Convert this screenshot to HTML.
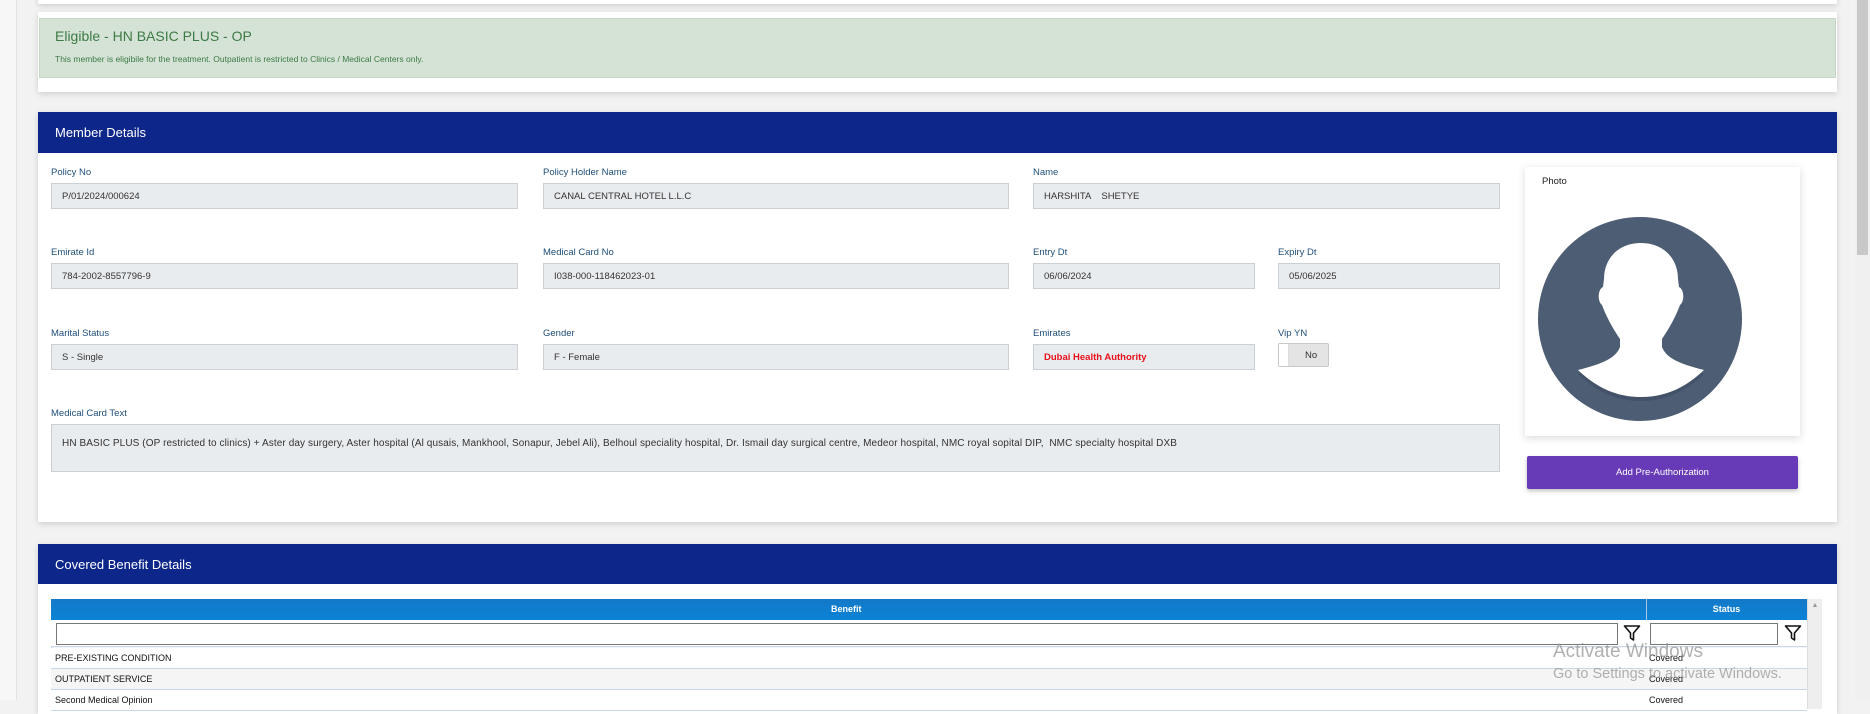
<!DOCTYPE html>
<html><head><meta charset="utf-8">
<style>
*{box-sizing:border-box;margin:0;padding:0}
body{width:1870px;height:700px;overflow:hidden;background:#f2f2f2;font-family:"Liberation Sans",sans-serif;position:relative}
.abs{position:absolute}
.card{position:absolute;background:#fff;box-shadow:0 2px 6px rgba(0,0,0,.15)}
.hdr{position:absolute;background:#0d2689;color:#fff;font-size:13px;padding-left:17px;display:flex;align-items:center}
.lbl{position:absolute;font-size:9.5px;color:#1f4e79}
.inp{position:absolute;background:#e9ecef;border:1px solid #ccd0d4;font-size:9.5px;color:#333;padding-left:10px;display:flex;align-items:center;height:26px}
.row{position:absolute;left:51px;width:1756px;height:21px;border-bottom:1px solid #c5d7ea;font-size:9px;color:#111;background:#fff}
.row span{position:absolute;top:5px}
</style></head><body>
<div class="abs" style="left:0;top:0;width:17px;height:700px;background:#f7f7f7;border-right:1px solid #e2e2e2"></div>
<div class="abs" style="right:0;top:0;width:15px;height:700px;background:#f0f0f0"></div>
<div class="abs" style="right:2px;top:0;width:11px;height:255px;background:#c8c8c8"></div>
<div class="card" style="left:38px;top:-10px;width:1799px;height:14px"></div>

<div class="card" style="left:38px;top:12px;width:1799px;height:80px"></div>
<div class="abs" style="left:39px;top:18px;width:1797px;height:60px;background:#d4e3d6;border:1px solid #c3d9c6"></div>
<div class="abs" style="left:55px;top:28px;font-size:14px;color:#3d7a45">Eligible - HN BASIC PLUS - OP</div>
<div class="abs" style="left:55px;top:54px;font-size:8.5px;color:#3d7a45">This member is eligibile for the treatment. Outpatient is restricted to Clinics / Medical Centers only.</div>

<div class="card" style="left:38px;top:112px;width:1799px;height:410px"></div>
<div class="hdr" style="left:38px;top:112px;width:1799px;height:41px">Member Details</div>

<div class="lbl" style="left:51px;top:167px">Policy No</div>
<div class="inp" style="left:51px;top:183px;width:467px">P/01/2024/000624</div>
<div class="lbl" style="left:543px;top:167px">Policy Holder Name</div>
<div class="inp" style="left:543px;top:183px;width:466px">CANAL CENTRAL HOTEL L.L.C</div>
<div class="lbl" style="left:1033px;top:167px">Name</div>
<div class="inp" style="left:1033px;top:183px;width:467px">HARSHITA &nbsp;&nbsp; SHETYE</div>

<div class="lbl" style="left:51px;top:247px">Emirate Id</div>
<div class="inp" style="left:51px;top:263px;width:467px">784-2002-8557796-9</div>
<div class="lbl" style="left:543px;top:247px">Medical Card No</div>
<div class="inp" style="left:543px;top:263px;width:466px">I038-000-118462023-01</div>
<div class="lbl" style="left:1033px;top:247px">Entry Dt</div>
<div class="inp" style="left:1033px;top:263px;width:222px">06/06/2024</div>
<div class="lbl" style="left:1278px;top:247px">Expiry Dt</div>
<div class="inp" style="left:1278px;top:263px;width:222px">05/06/2025</div>

<div class="lbl" style="left:51px;top:328px">Marital Status</div>
<div class="inp" style="left:51px;top:344px;width:467px">S - Single</div>
<div class="lbl" style="left:543px;top:328px">Gender</div>
<div class="inp" style="left:543px;top:344px;width:466px">F - Female</div>
<div class="lbl" style="left:1033px;top:328px">Emirates</div>
<div class="inp" style="left:1033px;top:344px;width:222px;color:#e8101a;font-weight:bold">Dubai Health Authority</div>
<div class="lbl" style="left:1278px;top:328px">Vip YN</div>
<div class="abs" style="left:1278px;top:343px;width:51px;height:24px;background:#e4e4e4;border:1px solid #c8c8c8;border-radius:2px;font-size:9.5px;color:#333"><div class="abs" style="left:0;top:0;width:10px;height:22px;background:#fff;border-right:1px solid #ddd"></div><span class="abs" style="left:26px;top:6px">No</span></div>

<div class="lbl" style="left:51px;top:408px">Medical Card Text</div>
<div class="abs" style="left:51px;top:424px;width:1449px;height:48px;background:#e9ecef;border:1px solid #ccd0d4;font-size:10px;color:#333;padding:13px 0 0 10px;letter-spacing:0.1px">HN BASIC PLUS (OP restricted to clinics) + Aster day surgery, Aster hospital (Al qusais, Mankhool, Sonapur, Jebel Ali), Belhoul speciality hospital, Dr. Ismail day surgical centre, Medeor hospital, NMC royal sopital DIP, &nbsp;NMC specialty hospital DXB</div>

<div class="card" style="left:1525px;top:167px;width:275px;height:269px;box-shadow:0 2px 8px rgba(0,0,0,.15)"></div>
<div class="abs" style="left:1542px;top:176px;font-size:9.5px;color:#222">Photo</div>
<svg class="abs" style="left:1538px;top:217px" width="205" height="205" viewBox="0 0 205 205">
<defs><clipPath id="c"><circle cx="102" cy="102" r="102"/></clipPath></defs>
<circle cx="102" cy="102" r="102" fill="#4d5d73"/>
<g clip-path="url(#c)">
<path d="M103 184 C126 184 146 176 166 157 L160 155 C146 170 126 178 103 178 C80 178 60 170 46 155 L40 157 C60 176 80 184 103 184Z" fill="#435268"/>
<path d="M103 26 C80 26 66 42 66 62 L65 70 C60 72 59 84 64 88 C70 104 78 116 82 122 L82 130 C78 140 68 146 40 153 C60 172 80 180 103 180 C126 180 146 172 166 153 C138 146 128 140 124 130 L124 122 C128 116 136 104 142 88 C147 84 146 72 141 70 L140 62 C140 42 126 26 103 26Z" fill="#fff"/>
</g>
</svg>
<div class="abs" style="left:1527px;top:456px;width:271px;height:33px;background:#673ab7;border-radius:2px;color:#fff;font-size:9.5px;display:flex;align-items:center;justify-content:center;box-shadow:0 2px 4px rgba(0,0,0,.25)">Add Pre-Authorization</div>

<div class="card" style="left:38px;top:544px;width:1799px;height:170px"></div>
<div class="hdr" style="left:38px;top:544px;width:1799px;height:40px">Covered Benefit Details</div>

<div class="abs" style="left:51px;top:599px;width:1771px;height:110px;border:1px solid #a9c6e4;background:#f5f5f5"></div>
<div class="abs" style="left:51px;top:599px;width:1756px;height:21px;background:linear-gradient(#1479c8,#0a82d6);color:#fff;font-size:9px;font-weight:bold"><span class="abs" style="left:780px;top:5px">Benefit</span></div>
<div class="abs" style="left:1646px;top:599px;width:1px;height:110px;background:#a9c6e4"></div>
<div class="abs" style="left:1646px;top:599px;width:161px;height:21px;color:#fff;font-size:9px;font-weight:bold;text-align:center;padding-top:5px">Status</div>
<div class="abs" style="left:1807px;top:599px;width:15px;height:110px;background:#eee;border-left:1px solid #ddd;font-size:7px;color:#999;text-align:center;padding-top:3px">▲</div>
<div class="abs" style="left:51px;top:620px;width:1756px;height:27px;background:#fff;border-bottom:1px solid #c5d7ea"></div>
<div class="abs" style="left:56px;top:623px;width:1562px;height:22px;border:1px solid #777;background:#fff"></div>
<svg class="abs" style="left:1623px;top:624px" width="18" height="18" viewBox="0 0 18 18"><path d="M1.5 2 H16.5 L10.5 9 V16 L7.5 14 V9 Z" fill="none" stroke="#111" stroke-width="1.6" stroke-linejoin="round"/></svg>
<div class="abs" style="left:1650px;top:623px;width:128px;height:22px;border:1px solid #777;background:#fff"></div>
<svg class="abs" style="left:1784px;top:624px" width="18" height="18" viewBox="0 0 18 18"><path d="M1.5 2 H16.5 L10.5 9 V16 L7.5 14 V9 Z" fill="none" stroke="#111" stroke-width="1.6" stroke-linejoin="round"/></svg>

<div class="row" style="top:648px"><span style="left:4px">PRE-EXISTING CONDITION</span><span style="left:1598px">Covered</span></div>
<div class="row" style="top:669px;background:#f5f5f5"><span style="left:4px">OUTPATIENT SERVICE</span><span style="left:1598px">Covered</span></div>
<div class="row" style="top:690px"><span style="left:4px">Second Medical Opinion</span><span style="left:1598px">Covered</span></div>

<div class="abs" style="left:1553px;top:641px;font-size:19px;color:rgba(150,150,150,.75)">Activate Windows</div>
<div class="abs" style="left:1553px;top:666px;font-size:14.5px;color:rgba(150,150,150,.75)">Go to Settings to activate Windows.</div>
</body></html>
